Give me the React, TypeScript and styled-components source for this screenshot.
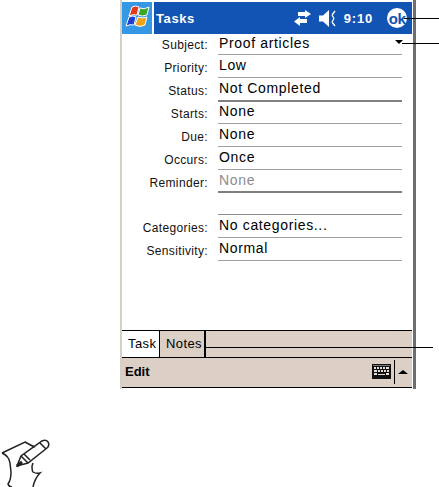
import styled, { createGlobalStyle } from "styled-components";

const GlobalStyle = createGlobalStyle`
  html, body {
    margin: 0;
    padding: 0;
    background: #fff;
  }
`;

const uiFont = `"Liberation Sans", Arial, sans-serif`;

const Page = styled.div`
  position: relative;
  width: 439px;
  height: 487px;
  overflow: hidden;
  padding: 0 0 0 120px;
  box-sizing: border-box;
  background: #fff;
  font-family: ${uiFont};
  color: #000;
`;

const Device = styled.div`
  width: 296px;
  height: 389px;
  box-sizing: border-box;
  display: flex;
  flex-direction: column;
  padding: 2px 0 1px;
  border-left: 2px solid #d4d0c8;
  border-right: 3px solid #6e6e6e;
  background: #fff;
`;

const TitleBar = styled.header`
  display: flex;
  align-items: center;
  height: 32px;
  margin-right: 1px;
  background: #1254b4;
  color: #fff;
`;

const StartTile = styled.div`
  display: flex;
  align-items: center;
  justify-content: center;
  flex: none;
  width: 30px;
  height: 29px;
  padding-bottom: 3px;
  background: #3498e4;
  border-right: 2px solid #fff;
`;

const Title = styled.div`
  flex: 1;
  padding-left: 2px;
  font-size: 13px;
  font-weight: 700;
  letter-spacing: 0.6px;
`;

const Clock = styled.div`
  margin: 0 14px 0 6px;
  font-size: 13px;
  font-weight: 700;
  letter-spacing: 0.8px;
`;

const StatusIcon = styled.svg<{ $gap: number }>`
  display: block;
  flex: none;
  margin-left: ${(p) => p.$gap}px;
`;

const OkBadge = styled.div`
  display: flex;
  align-items: center;
  justify-content: center;
  flex: none;
  width: 20px;
  height: 20px;
  margin-right: 5px;
  border-radius: 50%;
  background: #fff;
  color: #1254b4;
  font-size: 15px;
  font-weight: 700;
  letter-spacing: -0.5px;
`;

const Form = styled.div`
  flex: 1;
  display: flex;
  flex-direction: column;
`;

const Row = styled.div<{ $first?: boolean }>`
  display: grid;
  grid-template-columns: 86px 184px;
  column-gap: 10px;
  height: ${(p) => (p.$first ? "21px" : "23px")};
`;

const Label = styled.div<{ $first?: boolean }>`
  align-self: center;
  padding-top: ${(p) => (p.$first ? "1px" : "3px")};
  text-align: right;
  font-size: 12px;
  letter-spacing: 0.35px;
  color: #111;
`;

const Value = styled.div<{ $rule?: string; $muted?: boolean; $first?: boolean }>`
  position: relative;
  box-sizing: border-box;
  padding-left: 1px;
  line-height: ${(p) => (p.$first ? "18px" : "21px")};
  font-size: 14px;
  letter-spacing: 0.65px;
  color: ${(p) => (p.$muted ? "#8c8c8c" : "#000")};
  border-bottom: 1px solid ${(p) => (p.$rule ? "#808080" : "#a0a0a0")};
  box-shadow: ${(p) => p.$rule || "none"};
`;

const DropArrow = styled.span`
  position: absolute;
  top: 6px;
  right: -1px;
  width: 0;
  height: 0;
  border-left: 4px solid transparent;
  border-right: 4px solid transparent;
  border-top: 4px solid #000;
`;

const BlankLine = styled.div`
  height: 1px;
  margin: 21px 0 0 96px;
  width: 184px;
  background: #8c8c8c;
`;

const Tabs = styled.div`
  display: flex;
  flex: none;
  height: 28px;
  box-sizing: border-box;
  margin-right: 1px;
  background: #dccfc6;
  border-top: 1px solid #000;
  border-bottom: 1px solid #000;
`;

const Tab = styled.div<{ $active?: boolean }>`
  box-sizing: border-box;
  width: ${(p) => (p.$active ? "38px" : "46px")};
  padding: 5px 0 0 6px;
  background: ${(p) => (p.$active ? "#fff" : "#dccfc6")};
  border-right: ${(p) => (p.$active ? "1px" : "2px")} solid #000;
  font-size: 13px;
  letter-spacing: 0.4px;
`;

const CommandBar = styled.div`
  display: flex;
  flex: none;
  align-items: center;
  height: 30px;
  box-sizing: border-box;
  margin-right: 1px;
  padding: 0 0 2px 3px;
  background: #dccfc6;
  border-bottom: 1px solid #000;
`;

const MenuItem = styled.div`
  flex: 1;
  font-size: 13px;
  font-weight: 700;
`;

const SipDivider = styled.div`
  width: 1px;
  height: 24px;
  margin: 0 3px;
  background: #000;
`;

const SipArrow = styled.span`
  width: 0;
  height: 0;
  margin-right: 4px;
  border-left: 5px solid transparent;
  border-right: 5px solid transparent;
  border-bottom: 4px solid #000;
`;

const Callout = styled.div<{ $top: number; $left: number; $width: number }>`
  position: absolute;
  top: ${(p) => p.$top}px;
  left: ${(p) => p.$left}px;
  width: ${(p) => p.$width}px;
  height: 1px;
  background: #000;
`;

const NoteIcon = styled.svg`
  position: absolute;
  left: 0;
  top: 436px;
`;

const WindowsFlag = () => (
  <svg width="26" height="24" viewBox="0 0 26 24">
    <path d="M8 2 Q12 0 15 2 L13 10 Q9 9 5 11 Z" fill="#e23a1c" stroke="#fff" strokeWidth="1" />
    <path d="M16 3 Q20 5 25 2 L23 10 Q18 12 14 10 Z" fill="#3fa52a" stroke="#fff" strokeWidth="1" />
    <path d="M5 12 Q9 10 12 12 L10 20 Q6 19 2 21 Z" fill="#1e3fd0" stroke="#fff" strokeWidth="1" />
    <path d="M14 12 Q18 14 23 12 L21 20 Q16 23 11 20 Z" fill="#eda417" stroke="#fff" strokeWidth="1" />
  </svg>
);

const SyncIcon = () => (
  <StatusIcon $gap={0} width="19" height="16" viewBox="0 0 19 16" fill="#fff">
    <path d="M5 2h7V0l6 4-6 4V6H5z" />
    <path d="M14 9H7V7L1 11.500 7 16v-3h7z" />
  </StatusIcon>
);

const VolumeIcon = () => (
  <StatusIcon $gap={7} width="19" height="17" viewBox="0 0 19 17">
    <path d="M0 5.500h4L10 0v17L4 11.500H0z" fill="#fff" />
    <path d="M16 1l-3 4M13 5l2 3.500M15 8.500l-2 3.500M13 12l3 4" stroke="#fff" strokeWidth="1.300" fill="none" />
  </StatusIcon>
);

const KeyboardIcon = () => (
  <svg width="19" height="15" viewBox="0 0 19 15">
    <rect width="19" height="15" fill="#111" />
    <rect x="1" y="1" width="17" height="1" fill="#777" />
    <g fill="#e6ded8">
      <path d="M2 3h2v2H2zM5 3h2v2H5zM8 3h2v2H8zM11 3h2v2h-2zM14 3h3v2h-3z" />
      <path d="M2 6h3v2H2zM6 6h2v2H6zM9 6h2v2H9zM12 6h2v2h-2zM15 6h2v2h-2z" />
      <path d="M2 9h3v2H2zM14 9h3v2h-3zM6 10h7v1H6z" />
    </g>
  </svg>
);

// heavy rules are 2px: Status grows below its row, Reminder grows inside it
const rows = [
  { label: "Priority:", value: "Low" },
  { label: "Status:", value: "Not Completed", rule: "0 1px 0 #808080" },
  { label: "Starts:", value: "None" },
  { label: "Due:", value: "None" },
  { label: "Occurs:", value: "Once" },
  { label: "Reminder:", value: "None", rule: "inset 0 -1px 0 #808080", muted: true },
];

const App = () => (
  <>
    <GlobalStyle />
    <Page>
      <Device>
        <TitleBar>
          <StartTile>
            <WindowsFlag />
          </StartTile>
          <Title>Tasks</Title>
          <SyncIcon />
          <VolumeIcon />
          <Clock>9:10</Clock>
          <OkBadge>ok</OkBadge>
        </TitleBar>
        <Form>
          <Row $first>
            <Label $first>Subject:</Label>
            <Value $first>
              Proof articles
              <DropArrow />
            </Value>
          </Row>
          {rows.map((row) => (
            <Row key={row.label}>
              <Label>{row.label}</Label>
              <Value $rule={row.rule} $muted={row.muted}>
                {row.value}
              </Value>
            </Row>
          ))}
          <BlankLine />
          <Row>
            <Label>Categories:</Label>
            <Value>No categories...</Value>
          </Row>
          <Row>
            <Label>Sensitivity:</Label>
            <Value>Normal</Value>
          </Row>
        </Form>
        <Tabs>
          <Tab $active>Task</Tab>
          <Tab>Notes</Tab>
        </Tabs>
        <CommandBar>
          <MenuItem>Edit</MenuItem>
          <KeyboardIcon />
          <SipDivider />
          <SipArrow />
        </CommandBar>
      </Device>
      <Callout $top={18} $left={404} $width={35} />
      <Callout $top={43} $left={402} $width={37} />
      <Callout $top={347} $left={206} $width={227} />
      <NoteIcon width="50" height="51" viewBox="0 0 50 51" fill="none" stroke="#222" strokeWidth="1.500">
        <path d="M2 17 L25 6 Q30 9 35 11" />
        <path d="M2 17 Q9 20 10 27 L11 36 Q11 44 8 48 Q9 51 12 51" />
        <path d="M33 27 L32 30 Q32 35 33 36 Q36 38 40 37 Q35 42 33 51" />
        <path d="M17 30 L21 20 L42 5 Q46 3 48 6 Q50 9 47 12 L28 27 Z" />
        <path d="M21 20 L28 27 M24 18 L30 24 M40 7 L46 13" />
        <path d="M17 30 L22 26" strokeWidth="3" />
      </NoteIcon>
    </Page>
  </>
);

export default App;
